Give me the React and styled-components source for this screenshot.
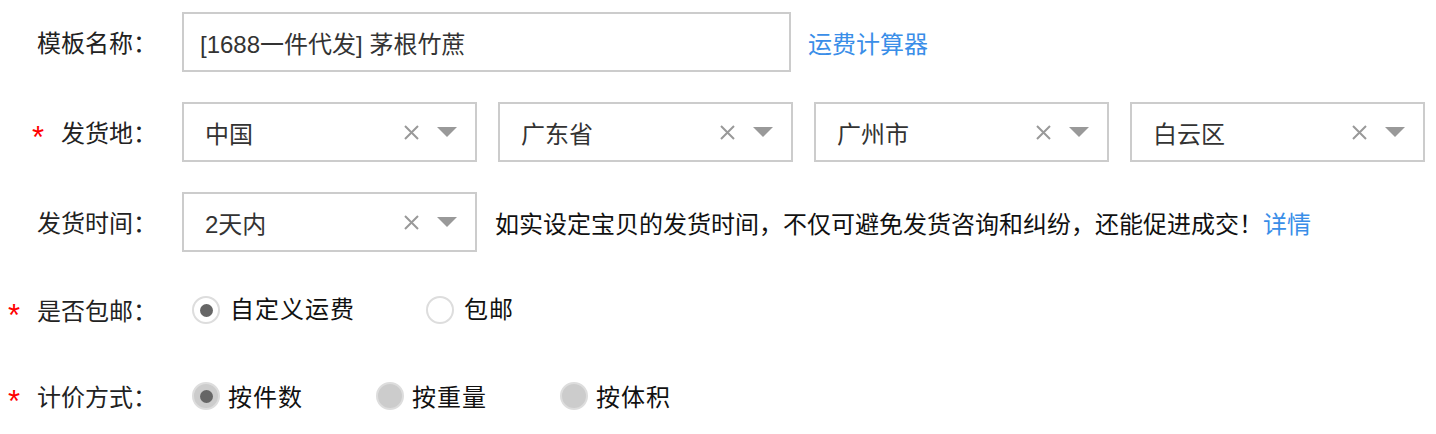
import React from "react";
import styled, { createGlobalStyle } from "styled-components";

const Global = createGlobalStyle`
  html, body { margin: 0; padding: 0; background: #fff; }
  body {
    font-family: "Liberation Sans", "Noto Sans CJK SC", sans-serif;
    color: #222;
  }
`;

const Form = styled.div`
  padding-top: 12px;
  width: 1436px;
  height: 434px;
  box-sizing: border-box;
  overflow: hidden;
`;

const Row = styled.div`
  display: flex;
  align-items: center;
  height: ${(p) => (p.$short ? 56 : 60)}px;
  margin-bottom: 30px;
`;

const Label = styled.div`
  width: 157px;
  margin-right: 25px;
  flex-shrink: 0;
  text-align: right;
  font-size: 24px;
  color: #222;
  white-space: nowrap;
  position: relative;
  top: -1px;
`;

const Star = styled.span`
  color: #f00;
  font-size: 31px;
  line-height: 0;
  margin-right: 17px;
  position: relative;
  top: 6px;
  font-family: "Liberation Sans", sans-serif;
`;

const TextInput = styled.div`
  width: 609px;
  height: 60px;
  box-sizing: border-box;
  border: 2px solid #ccc;
  padding-left: 16px;
  display: flex;
  align-items: center;
  font-size: 24px;
  color: #333;
`;

const Link = styled.a`
  color: #3a8ee8;
  font-size: 24px;
  text-decoration: none;
  margin-left: ${(p) => p.$ml || 0}px;
  cursor: pointer;
`;

const Selects = styled.div`
  display: flex;
  gap: 21px;
`;

const SelectBox = styled.div`
  width: 295px;
  height: 60px;
  box-sizing: border-box;
  border: 2px solid #ccc;
  padding-left: 21px;
  padding-right: 18px;
  display: flex;
  align-items: center;
  font-size: 24px;
  color: #333;
`;

const SelectValue = styled.span`
  flex: 1;
`;

const Icons = styled.span`
  display: flex;
  align-items: center;
  gap: 18px;
`;

const Tip = styled.span`
  font-size: 24px;
  color: #111;
  margin-left: 18px;
  white-space: nowrap;
`;

const RadioGroup = styled.div`
  display: flex;
  align-items: center;
  padding-left: 10px;
`;

const RadioItem = styled.label`
  display: flex;
  align-items: center;
  margin-right: ${(p) => p.$mr}px;
  font-size: 24px;
  color: #111;
`;

const RadioCircle = styled.span`
  width: 28px;
  height: 28px;
  box-sizing: border-box;
  border-radius: 50%;
  border: 2px solid #ddd;
  background: ${(p) => (p.$disabled ? "#ccc" : "#fff")};
  display: flex;
  align-items: center;
  justify-content: center;
  margin-right: ${(p) => p.$gap}px;
  &::after {
    content: "";
    display: ${(p) => (p.$checked ? "block" : "none")};
    width: 13px;
    height: 13px;
    border-radius: 50%;
    background: #666;
  }
`;

const RadioText = styled.span`
  position: relative;
  top: ${(p) => p.$shift || 0}px;
  letter-spacing: 1px;
`;

const ClearIcon = () => (
  <svg width="15" height="15" viewBox="0 0 15 15">
    <path d="M1 1 L14 14 M14 1 L1 14" stroke="#999" strokeWidth="2" fill="none" />
  </svg>
);

const Caret = () => (
  <svg width="20" height="10" viewBox="0 0 20 10">
    <polygon points="0,0 20,0 10,10" fill="#999" />
  </svg>
);

const Select = ({ value }) => (
  <SelectBox>
    <SelectValue>{value}</SelectValue>
    <Icons>
      <ClearIcon />
      <Caret />
    </Icons>
  </SelectBox>
);

const Radio = ({ checked, disabled, children, gap = 10, shift, mr = 74 }) => (
  <RadioItem $mr={mr}>
    <RadioCircle $checked={checked} $disabled={disabled} $gap={gap} />
    <RadioText $shift={shift}>{children}</RadioText>
  </RadioItem>
);

export default function App() {
  return (
    <>
      <Global />
      <Form>
        <Row>
          <Label>模板名称：</Label>
          <TextInput>[1688一件代发] 茅根竹蔗</TextInput>
          <Link $ml={17}>运费计算器</Link>
        </Row>
        <Row>
          <Label>
            <Star>*</Star>发货地：
          </Label>
          <Selects>
            <Select value="中国" />
            <Select value="广东省" />
            <Select value="广州市" />
            <Select value="白云区" />
          </Selects>
        </Row>
        <Row>
          <Label>发货时间：</Label>
          <Select value="2天内" />
          <Tip>如实设定宝贝的发货时间，不仅可避免发货咨询和纠纷，还能促进成交！</Tip>
          <Link $ml={0}>详情</Link>
        </Row>
        <Row $short>
          <Label>
            <Star>*</Star>是否包邮：
          </Label>
          <RadioGroup>
            <Radio checked shift={-3} mr={71}>自定义运费</Radio>
            <Radio shift={-3}>包邮</Radio>
          </RadioGroup>
        </Row>
        <Row $short>
          <Label>
            <Star>*</Star>计价方式：
          </Label>
          <RadioGroup>
            <Radio checked disabled gap={8} shift={-1} mr={73}>按件数</Radio>
            <Radio disabled gap={8} shift={-1} mr={73}>按重量</Radio>
            <Radio disabled gap={8} shift={-1} mr={73}>按体积</Radio>
          </RadioGroup>
        </Row>
      </Form>
    </>
  );
}
